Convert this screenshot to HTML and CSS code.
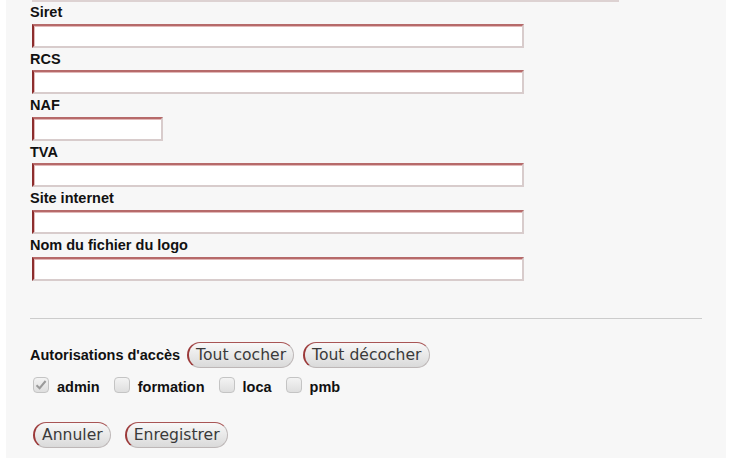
FILE: index.html
```html
<!DOCTYPE html>
<html lang="fr">
<head>
<meta charset="utf-8">
<title>Formulaire</title>
<link rel="stylesheet" href="styles.css">
</head>
<body>
<div class="panel">
  <div class="prev-field"></div>
  <label class="lbl">Siret</label>
  <input class="field" type="text">
  <label class="lbl">RCS</label>
  <input class="field" type="text">
  <label class="lbl">NAF</label>
  <input class="field small" type="text">
  <label class="lbl">TVA</label>
  <input class="field" type="text">
  <label class="lbl">Site internet</label>
  <input class="field" type="text">
  <label class="lbl">Nom du fichier du logo</label>
  <input class="field" type="text">

  <hr class="sep">

  <div class="access">
    <span class="access-title">Autorisations d'accès</span>
    <button class="btn" type="button">Tout cocher</button>
    <button class="btn" type="button">Tout décocher</button>
  </div>
  <div class="checks">
    <label class="chk"><span class="box checked"><svg viewBox="0 0 16 16" width="16" height="16"><path d="M3.5 8.2 L6.6 11.2 L12.6 4" fill="none" stroke="#9a9a9a" stroke-width="2"/></svg></span><span class="chk-text">admin</span></label>
    <label class="chk"><span class="box"></span><span class="chk-text">formation</span></label>
    <label class="chk"><span class="box"></span><span class="chk-text">loca</span></label>
    <label class="chk"><span class="box"></span><span class="chk-text">pmb</span></label>
  </div>
  <div class="actions">
    <button class="btn" type="button">Annuler</button>
    <button class="btn" type="button">Enregistrer</button>
  </div>
</div>
</body>
</html>
```
FILE: styles.css
```css
html, body {
  margin: 0;
  padding: 0;
  background: #ffffff;
}
body {
  font-family: "Liberation Sans", Arial, sans-serif;
  color: #111;
  overflow: hidden;
  height: 458px;
}
.panel {
  margin-left: 6px;
  width: 720px;
  height: 458px;
  background: #f7f7f7;
  padding: 0 0 0 24px;
  box-sizing: border-box;
}
.prev-field {
  margin-left: 2px;
  width: 587px;
  height: 0;
  border-bottom: 2px solid #ddd2d2;
}
.lbl {
  display: block;
  font-weight: bold;
  font-size: 14.5px;
  line-height: 20.6px;
  height: 20.6px;
  color: #111;
}
.field {
  display: block;
  box-sizing: border-box;
  width: 492px;
  height: 24px;
  margin: 1px 0 1px 2px;
  padding: 0 4px;
  background: #fff;
  border-style: solid;
  border-width: 2px;
  border-color: #b66a6a #d8cccc #d8cccc #8c2d2d;
  box-shadow: inset 1px 1px 0 #e2b8b8;
  outline: none;
}
.field.small {
  width: 131px;
}
.sep {
  margin: 37px 0 0 0;
  width: 672px;
  height: 0;
  border: 0;
  border-top: 1px solid #cccccc;
}
.access {
  display: flex;
  align-items: center;
  margin-top: 23px;
  height: 26px;
}
.access-title {
  font-weight: bold;
  font-size: 14.5px;
  margin-right: 7px;
}
.btn {
  height: 26px;
  padding: 0 7px;
  margin-right: 9px;
  border-radius: 13px;
  border: 1px solid #bdb7b7;
  border-left: 2px solid #9c3a3a;
  border-top: 1px solid #a85555;
  background: linear-gradient(#f8f8f8, #dadada);
  font-family: "DejaVu Sans", sans-serif;
  font-size: 15.6px;
  color: #3a3a3a;
  line-height: 22px;
}
.checks {
  display: flex;
  align-items: center;
  margin-top: 8px;
  height: 18px;
  padding-left: 3px;
}
.chk {
  display: flex;
  align-items: center;
  margin-right: 14px;
}
.box {
  width: 16px;
  height: 16px;
  box-sizing: border-box;
  border: 1px solid #c4c4c4;
  border-radius: 4px;
  background: linear-gradient(#f3f3f3, #dedede);
  display: inline-block;
  margin-right: 8px;
  position: relative;
}
.box svg {
  position: absolute;
  left: -1px;
  top: -1px;
}
.chk-text {
  font-weight: bold;
  font-size: 14.5px;
  margin-top: 4px;
}
.actions {
  display: flex;
  margin-top: 28px;
  padding-left: 3px;
}
.actions .btn {
  margin-right: 14px;
}
```
